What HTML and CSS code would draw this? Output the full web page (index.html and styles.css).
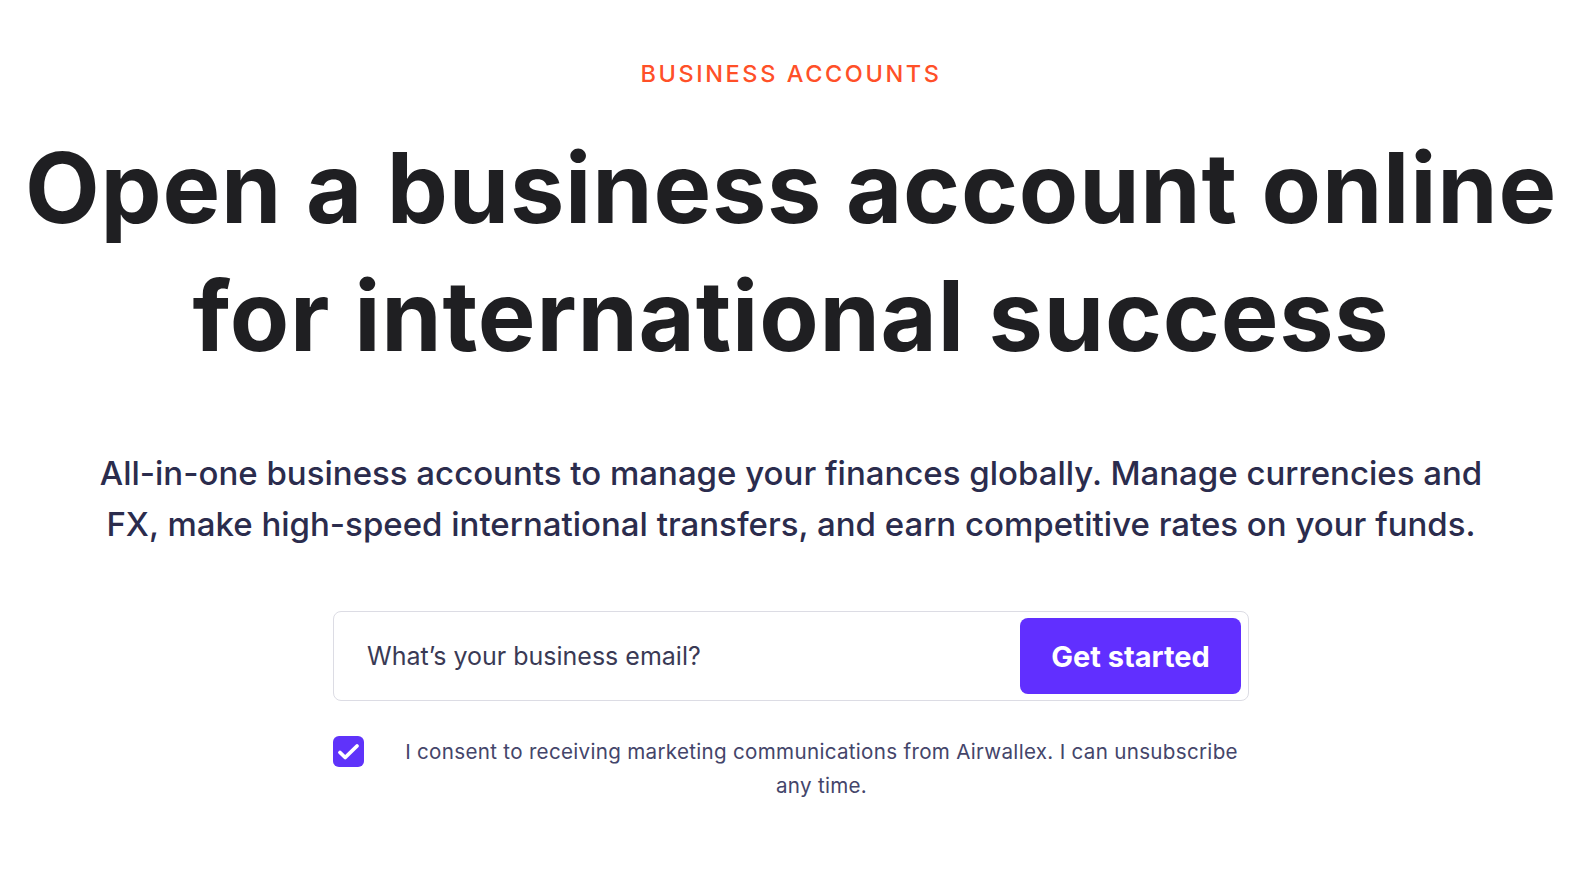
FILE: index.html
```html
<!DOCTYPE html>
<html lang="en">
<head>
<meta charset="utf-8">
<title>Business accounts</title>
<link rel="stylesheet" href="styles.css">
</head>
<body>
<main class="hero">
  <p class="eyebrow">BUSINESS ACCOUNTS</p>
  <h1 class="title">Open a business account online<br>for international success</h1>
  <p class="lead">All-in-one business accounts to manage your finances globally. Manage currencies and FX, make high-speed international transfers, and earn competitive rates on your funds.</p>
  <form class="signup">
    <input class="email" type="email" placeholder="What’s your business email?">
    <button class="cta" type="button">Get started</button>
  </form>
  <label class="consent">
    <span class="check">
      <svg viewBox="0 0 31 31" width="31" height="31"><path d="M7 16.5l5.2 5L24 10" fill="none" stroke="#fff" stroke-width="3.8" stroke-linecap="round" stroke-linejoin="round"/></svg>
    </span>
    <span class="consent-text">I consent to receiving marketing communications from Airwallex. I can unsubscribe any time.</span>
  </label>
</main>
</body>
</html>
```
FILE: styles.css
```css
* { box-sizing: border-box; }
html, body { margin: 0; background: #fff; }
body { font-family: "Inter", "Noto Sans", sans-serif; color: #1e1e22; }
.hero { display: flex; flex-direction: column; align-items: center; padding-top: 58px; }
.eyebrow { margin: 0; font-size: 23.5px; font-weight: 500; letter-spacing: 2.6px; color: #ff5028; line-height: 32px; }
.title { margin: 34px 0 0; font-size: 97px; font-weight: 700; line-height: 128px; text-align: center; color: #1f1f22; letter-spacing: 0.8px; }
.lead { margin: 68px 0 0; width: 1400px; font-size: 33px; font-weight: 500; line-height: 51px; text-align: center; color: #2b2c4d; letter-spacing: 0; }
.signup { margin-top: 61px; width: 916px; height: 90px; display: flex; align-items: center; justify-content: space-between; border: 1px solid #dcdce4; border-radius: 8px; padding: 0 7px 0 31px; }
.email { flex: 1; border: 0; outline: 0; font: inherit; font-size: 25px; color: #3a3a55; background: transparent; }
.email::placeholder { color: #3a3a55; }
.cta { width: 221px; height: 76px; border: 0; border-radius: 8px; background: #612fff; color: #fff; font: inherit; font-size: 29px; font-weight: 700; }
.consent { margin-top: 34px; width: 916px; display: flex; align-items: flex-start; gap: 30px; }
.check { flex: none; width: 31px; height: 31px; border-radius: 6px; background: #5f33fa; display: flex; margin-top: 1px; }
.consent-text { flex: 1; text-align: center; font-size: 20.6px; line-height: 34px; color: #44456a; letter-spacing: 0.3px; }
```
